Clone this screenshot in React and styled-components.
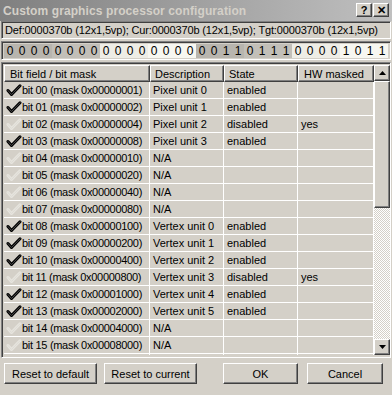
import React from "react";
import styled, { createGlobalStyle, css } from "styled-components";

const GlobalStyle = createGlobalStyle`
  html, body { margin: 0; padding: 0; background: #d4d0c8; }
  body { font-family: "Liberation Sans", Arial, sans-serif; font-size: 11px; color: #000; }
`;

const raised = css`
  border: 1px solid;
  border-color: #ffffff #404040 #404040 #ffffff;
  box-shadow: inset -1px -1px 0 #808080, inset 1px 1px 0 #d4d0c8;
`;

const sunken = css`
  border: 1px solid;
  border-color: #808080 #ffffff #ffffff #808080;
  box-shadow: inset 1px 1px 0 #404040, inset -1px -1px 0 #d4d0c8;
`;

const Window = styled.div`
  width: 392px;
  height: 395px;
  display: flex;
  flex-direction: column;
  background: #d4d0c8;
  overflow: hidden;
`;

const TitleBar = styled.div`
  height: 21px;
  flex: none;
  display: flex;
  align-items: center;
  justify-content: space-between;
  padding: 0 3px 0 3px;
  box-sizing: border-box;
  background: linear-gradient(to right, #808080, #c0c0c0);
`;

const TitleText = styled.span`
  font-family: "Liberation Sans", Arial, sans-serif;
  font-weight: bold;
  font-size: 12px;
  color: #d4d0c8;
  letter-spacing: 0.1px;
`;

const TitleButtons = styled.div`
  display: flex;
  gap: 1px;
  margin-top: -1px;
`;

const TitleButton = styled.div`
  width: 16px;
  height: 14px;
  box-sizing: border-box;
  ${raised};
  background: #d4d0c8;
  display: flex;
  align-items: center;
  justify-content: center;
  font-weight: bold;
  font-size: 11px;
  line-height: 1;
`;

const Content = styled.div`
  display: flex;
  flex-direction: column;
  padding: 0 1px;
`;

const InfoField = styled.div`
  height: 18px;
  box-sizing: border-box;
  ${sunken};
  display: flex;
  align-items: center;
  padding-left: 3px;
  white-space: nowrap;
  overflow: hidden;
  font-size: 11px;
  letter-spacing: -0.15px;
`;

const BitsField = styled.div`
  margin-top: 2px;
  height: 19px;
  box-sizing: border-box;
  ${sunken};
  padding: 2px;
  display: grid;
  grid-template-columns: repeat(32, 1fr);
`;

const BitCell = styled.div`
  display: flex;
  align-items: center;
  justify-content: center;
  font-size: 12px;
  background: ${(p) => p.$bg};
`;

const TableBox = styled.div`
  margin-top: 2px;
  height: 296px;
  box-sizing: border-box;
  ${sunken};
  padding: 2px;
  display: flex;
  overflow: hidden;
`;

const Grid = styled.div`
  width: 370px;
  flex: none;
  display: flex;
  flex-direction: column;
  overflow: hidden;
`;

const cols = "146px 74px 74px 76px";

const HeaderRow = styled.div`
  display: grid;
  grid-template-columns: ${cols};
  height: 17px;
  flex: none;
`;

const HeaderCell = styled.div`
  box-sizing: border-box;
  ${raised};
  display: flex;
  align-items: center;
  padding-left: ${(p) => p.$pad || 4}px;
  white-space: nowrap;
  overflow: hidden;
`;

const Row = styled.div`
  display: grid;
  grid-template-columns: ${cols};
  height: 17px;
  flex: none;
`;

const Cell = styled.div`
  box-sizing: border-box;
  border-right: 1px solid #ffffff;
  border-bottom: 1px solid #ffffff;
  display: flex;
  align-items: center;
  padding-left: 3px;
  white-space: nowrap;
  overflow: hidden;
  letter-spacing: ${(p) => (p.$tight ? "-0.3px" : "0")};
`;

const CheckBox = styled.span`
  width: 16px;
  height: 13px;
  flex: none;
  display: inline-flex;
  margin-right: 0;
  margin-left: -1px;
`;

const ScrollBar = styled.div`
  width: 16px;
  flex: none;
  display: flex;
  flex-direction: column;
  background-color: #ffffff;
  background-image: repeating-conic-gradient(#d4d0c8 0 25%, #ffffff 0 50%);
  background-size: 2px 2px;
`;

const ScrollButton = styled.div`
  height: ${(p) => p.$h}px;
  box-sizing: border-box;
  ${raised};
  background: #d4d0c8;
  display: flex;
  align-items: center;
  justify-content: center;
  flex: none;
`;

const Spacer = styled.div`
  flex: 1;
`;

const ButtonRow = styled.div`
  display: flex;
  padding: 5px 0 0 4px;
`;

const Button = styled.div`
  width: ${(p) => p.$w}px;
  margin-left: ${(p) => p.$ml || 0}px;
  height: 21px;
  box-sizing: border-box;
  ${raised};
  display: flex;
  align-items: center;
  justify-content: center;
  font-size: 11px;
`;

function Check({ on }) {
  const d = "M2 6.5 L5.5 10.5 L14 1.8";
  return (
    <CheckBox>
      <svg width="16" height="13" viewBox="0 0 16 13">
        <path d={d} fill="none" stroke={on ? "#000" : "#e6e4de"} strokeWidth="3" strokeLinecap="round" strokeLinejoin="round" />
        <path d={d} fill="none" stroke={on ? "#5a5a5a" : "#dcd9d2"} strokeWidth="0.8" strokeLinecap="round" strokeLinejoin="round" />
      </svg>
    </CheckBox>
  );
}

function Arrow({ up }) {
  return (
    <svg width="7" height="4" viewBox="0 0 7 4">
      <path d={up ? "M0 4 L3.5 0 L7 4 Z" : "M0 0 L7 0 L3.5 4 Z"} fill="#000" />
    </svg>
  );
}

const bits = "00000000000000000011011100001011".split("");
const bitBg = (i) => {
  const byte = Math.floor(i / 8);
  const nib = Math.floor(i / 4) % 2;
  if (byte % 2 === 0) return nib ? "#c2bfb8" : "#b8b5ae";
  return nib ? "#f7f7f1" : "#eeede6";
};

const rows = [
  ["Pixel unit 0", "enabled", ""],
  ["Pixel unit 1", "enabled", ""],
  ["Pixel unit 2", "disabled", "yes"],
  ["Pixel unit 3", "enabled", ""],
  ["N/A", "", ""],
  ["N/A", "", ""],
  ["N/A", "", ""],
  ["N/A", "", ""],
  ["Vertex unit 0", "enabled", ""],
  ["Vertex unit 1", "enabled", ""],
  ["Vertex unit 2", "enabled", ""],
  ["Vertex unit 3", "disabled", "yes"],
  ["Vertex unit 4", "enabled", ""],
  ["Vertex unit 5", "enabled", ""],
  ["N/A", "", ""],
  ["N/A", "", ""],
];

export default function App() {
  return (
    <Window>
      <GlobalStyle />
      <TitleBar>
        <TitleText>Custom graphics processor configuration</TitleText>
        <TitleButtons>
          <TitleButton>?</TitleButton>
          <TitleButton>✕</TitleButton>
        </TitleButtons>
      </TitleBar>
      <Content>
        <InfoField>Def:0000370b (12x1,5vp); Cur:0000370b (12x1,5vp); Tgt:0000370b (12x1,5vp)</InfoField>
        <BitsField>
          {bits.map((b, i) => (
            <BitCell key={i} $bg={bitBg(i)}>{b}</BitCell>
          ))}
        </BitsField>
        <TableBox>
          <Grid>
            <HeaderRow>
              <HeaderCell $pad={5}>Bit field / bit mask</HeaderCell>
              <HeaderCell>Description</HeaderCell>
              <HeaderCell>State</HeaderCell>
              <HeaderCell $pad={5}>HW masked</HeaderCell>
            </HeaderRow>
            {rows.map((r, i) => {
              const mask = (1 << i).toString(16).toUpperCase().padStart(8, "0");
              const num = String(i).padStart(2, "0");
              return (
                <Row key={i}>
                  <Cell $tight>
                    <Check on={r[1] === "enabled"} />
                    bit {num} (mask 0x{mask})
                  </Cell>
                  <Cell>{r[0]}</Cell>
                  <Cell>{r[1]}</Cell>
                  <Cell>{r[2]}</Cell>
                </Row>
              );
            })}
            <Row>
              <Cell /><Cell /><Cell /><Cell />
            </Row>
          </Grid>
          <ScrollBar>
            <ScrollButton $h={16}><Arrow up /></ScrollButton>
            <ScrollButton $h={127} />
            <Spacer />
            <ScrollButton $h={16}><Arrow /></ScrollButton>
          </ScrollBar>
        </TableBox>
      </Content>
      <ButtonRow>
        <Button $w={93}>Reset to default</Button>
        <Button $w={93} $ml={7}>Reset to current</Button>
        <Button $w={75} $ml={26}>OK</Button>
        <Button $w={76} $ml={9}>Cancel</Button>
      </ButtonRow>
    </Window>
  );
}
